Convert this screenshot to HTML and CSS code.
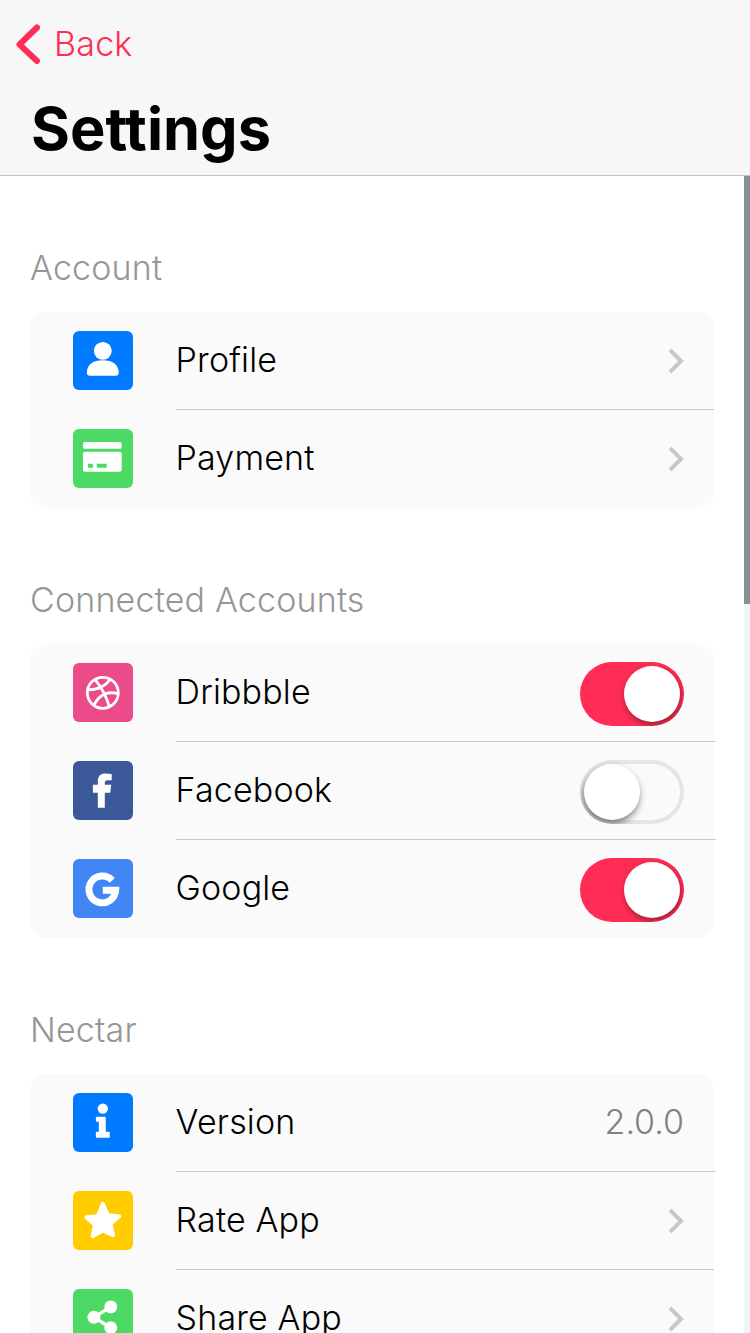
FILE: index.html
```html
<!DOCTYPE html>
<html lang="en">
<head>
<meta charset="utf-8">
<title>Settings</title>
<link rel="stylesheet" href="styles.css">
</head>
<body>
<header class="header">
  <a class="back">
    <svg class="back-icon" viewBox="0 0 24 40" width="24" height="40"><path d="M21 3.5 3.5 20.5 21 37"/></svg>
    <span>Back</span>
  </a>
  <h1 class="title">Settings</h1>
</header>
<div class="body">
  <main class="content">
    <section class="section">
      <h2 class="section-title">Account</h2>
      <div class="card">
        <div class="row">
          <svg class="icon blue" viewBox="0 0 60 60"><circle cx="30" cy="20" r="9" fill="#fff"/><path fill="#fff" d="M14 42c0-8 6-12.500 16-12.500S46 34 46 42c0 2-1 3-3 3H17c-2 0-3-1-3-3z"/></svg>
          <div class="row-body">
            <span class="label">Profile</span>
            <svg class="chevron" viewBox="0 0 16 26"><path d="M2 2l11 11L2 24"/></svg>
          </div>
        </div>
        <div class="row">
          <svg class="icon green" viewBox="0 0 60 60"><rect x="10" y="13" width="39" height="7" rx="2" fill="#fff"/><path fill="#fff" fill-rule="evenodd" d="M12 23h35a2 2 0 0 1 2 2v16a2 2 0 0 1-2 2H12a2 2 0 0 1-2-2V25a2 2 0 0 1 2-2zm3 12v4h5v-4zm9 0v4h10v-4z"/></svg>
          <div class="row-body">
            <span class="label">Payment</span>
            <svg class="chevron" viewBox="0 0 16 26"><path d="M2 2l11 11L2 24"/></svg>
          </div>
        </div>
      </div>
    </section>
    <section class="section">
      <h2 class="section-title">Connected Accounts</h2>
      <div class="card">
        <div class="row">
          <svg class="icon pink" viewBox="0 0 60 60"><g fill="none" stroke="#fff" stroke-width="2.800"><circle cx="30" cy="30" r="15.600"/><path d="M22 16.500c5 6 11.500 16 14.500 27.500M37.500 16.500C33 23 25 27 14.700 27M45.300 31c-8-2.500-18-1-24 11"/></g></svg>
          <div class="row-body wide">
            <span class="label">Dribbble</span>
            <div class="toggle on"><span class="knob"></span></div>
          </div>
        </div>
        <div class="row">
          <svg class="icon fb" viewBox="0 0 60 60"><path fill="#fff" d="M25 47V32h-5v-8h5v-4c0-5 3-7.500 7.500-7.500 2.500 0 4.500.2 6.500.5v6.500h-4c-2.500 0-3 1-3 3V24h6.500l-1 8H32v15z"/></svg>
          <div class="row-body wide">
            <span class="label">Facebook</span>
            <div class="toggle"><span class="knob"></span></div>
          </div>
        </div>
        <div class="row">
          <svg class="icon google" viewBox="0 0 60 60"><path fill="none" stroke="#fff" stroke-width="7" d="M39.500 21.500A13.500 13.500 0 1 0 43 31.500H30"/></svg>
          <div class="row-body">
            <span class="label">Google</span>
            <div class="toggle on"><span class="knob"></span></div>
          </div>
        </div>
      </div>
    </section>
    <section class="section">
      <h2 class="section-title">Nectar</h2>
      <div class="card">
        <div class="row">
          <svg class="icon blue" viewBox="0 0 60 60"><circle cx="30" cy="15.700" r="5.200" fill="#fff"/><path fill="#fff" d="M24 24h8c.6 0 1 .4 1 1v14h3c.6 0 1 .4 1 1v4c0 .6-.4 1-1 1H24c-.6 0-1-.4-1-1v-4c0-.6.4-1 1-1h2v-10h-2c-.6 0-1-.4-1-1v-3c0-.6.4-1 1-1z"/></svg>
          <div class="row-body wide">
            <span class="label">Version</span>
            <span class="value">2.0.0</span>
          </div>
        </div>
        <div class="row">
          <svg class="icon yellow" viewBox="0 0 60 60"><path fill="#fff" stroke="#fff" stroke-width="4" stroke-linejoin="round" d="M30 13l5 11.300 11.500 1.200-8.700 7.800 2.500 11.200L30 39.800l-10.300 5.700 2.500-11.200-8.700-7.800 11.500-1.200z"/></svg>
          <div class="row-body">
            <span class="label">Rate App</span>
            <svg class="chevron" viewBox="0 0 16 26"><path d="M2 2l11 11L2 24"/></svg>
          </div>
        </div>
        <div class="row">
          <svg class="icon green" viewBox="0 0 60 60"><g fill="#fff"><circle cx="38" cy="18" r="6.500"/><circle cx="21" cy="28.500" r="6.500"/><circle cx="38" cy="39" r="6.500"/></g><path fill="none" stroke="#fff" stroke-width="3.500" d="M38 18 21 28.500 38 39"/></svg>
          <div class="row-body">
            <span class="label">Share App</span>
            <svg class="chevron" viewBox="0 0 16 26"><path d="M2 2l11 11L2 24"/></svg>
          </div>
        </div>
      </div>
    </section>
  </main>
  <div class="scrolltrack"><div class="scrollthumb"></div></div>
</div>
</body>
</html>
```
FILE: styles.css
```css
* { box-sizing: border-box; }
html, body { margin: 0; height: 100%; overflow: hidden; }
body {
  display: flex;
  flex-direction: column;
  background: #fff;
  font-family: Inter, "Liberation Sans", sans-serif;
  color: #000;
}
.header {
  height: 176px;
  flex: none;
  background: #f7f7f7;
  border-bottom: 1px solid #c4c4c6;
  padding: 24px 0 0 16px;
}
.back {
  display: flex;
  align-items: center;
  gap: 14px;
  height: 40px;
  color: #ff2d55;
  font-size: 34px;
  font-weight: 300;
  line-height: 40px;
  letter-spacing: .2px;
}
.back-icon { fill: none; stroke: #ff2d55; stroke-width: 6; stroke-linecap: round; stroke-linejoin: round; display: block; }
.title {
  margin: 32px 0 0 15px;
  font-size: 59.5px;
  line-height: 64px;
  font-weight: 700;
}
.body { flex: 1; display: flex; min-height: 0; }
.content {
  flex: 1;
  min-width: 0;
  padding: 70px 30px 0;
  display: flex;
  flex-direction: column;
  gap: 70px;
  overflow: hidden;
}
.section { flex: none; }
.section-title {
  margin: 0 0 22px;
  font-size: 34px;
  line-height: 44px;
  font-weight: 300;
  letter-spacing: .17px;
  color: #969696;
}
.card {
  background: #fafafa;
  border-radius: 16px;
  padding-left: 43px;
}
.row {
  display: flex;
  align-items: center;
  height: 98px;
  gap: 43px;
}
.icon { width: 59.6px; height: 59.6px; border-radius: 6px; flex: none; display: block; margin-bottom: 1px; }
.blue { background: #007aff; }
.green { background: #4cd964; }
.pink { background: #ea4c89; }
.fb { background: #3b5998; }
.google { background: #4285f4; }
.yellow { background: #ffcc00; }
.row-body {
  flex: 1;
  min-width: 0;
  height: 100%;
  display: flex;
  align-items: center;
  justify-content: space-between;
  padding-right: 30px;
  border-bottom: 1px solid #c8c8ca;
}
.row-body.wide { margin-right: -2px; padding-right: 32px; }
.row:last-child .row-body { border-bottom: 0; }
.label { font-size: 34px; line-height: 44px; font-weight: 300; letter-spacing: .15px; margin-bottom: 2px; }
.value { font-size: 34px; line-height: 44px; font-weight: 300; color: #808085; margin-bottom: 2px; }
.chevron { width: 16px; height: 26px; fill: none; stroke: #c7c7cc; stroke-width: 4; display: block; }
.toggle {
  position: relative;
  width: 104px;
  height: 64px;
  margin-top: 2px;
  border-radius: 32px;
  overflow: hidden;
  background: #fafafa;
  box-shadow: inset 0 0 0 4px #e5e5e5;
}
.toggle.on { background: #ff2d55; box-shadow: none; }
.knob {
  position: absolute;
  top: 4px;
  left: 4px;
  width: 56px;
  height: 56px;
  border-radius: 50%;
  background: #fff;
  box-shadow: -1px 4px 7px rgba(0,0,0,.5);
}
.toggle.on .knob { left: 44px; box-shadow: 1px 3px 6px rgba(0,0,0,.38); }
.scrolltrack { width: 6px; flex: none; background: #f1f3f5; }
.scrollthumb { height: 428px; background: #868e96; }
```
